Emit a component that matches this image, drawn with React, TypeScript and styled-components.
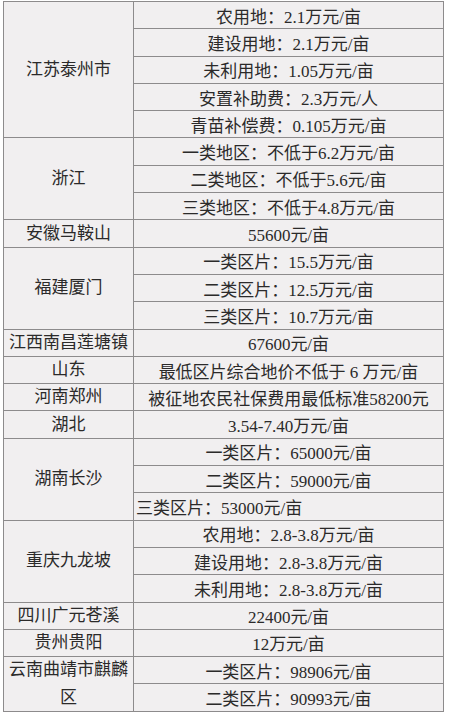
import styled, { createGlobalStyle } from 'styled-components';

// Land compensation standards by region. Left column spans its sub-rows.
type Entry = { text: string; left?: boolean };
type Region = { name: string; rows: Entry[] };

const REGIONS: Region[] = [
  {
    name: '江苏泰州市',
    rows: [
      { text: '农用地：2.1万元/亩' },
      { text: '建设用地：2.1万元/亩' },
      { text: '未利用地：1.05万元/亩' },
      { text: '安置补助费：2.3万元/人' },
      { text: '青苗补偿费：0.105万元/亩' },
    ],
  },
  {
    name: '浙江',
    rows: [
      { text: '一类地区：不低于6.2万元/亩' },
      { text: '二类地区：不低于5.6元/亩' },
      { text: '三类地区：不低于4.8万元/亩' },
    ],
  },
  { name: '安徽马鞍山', rows: [{ text: '55600元/亩' }] },
  {
    name: '福建厦门',
    rows: [
      { text: '一类区片：15.5万元/亩' },
      { text: '二类区片：12.5万元/亩' },
      { text: '三类区片：10.7万元/亩' },
    ],
  },
  { name: '江西南昌莲塘镇', rows: [{ text: '67600元/亩' }] },
  { name: '山东', rows: [{ text: '最低区片综合地价不低于 6 万元/亩' }] },
  { name: '河南郑州', rows: [{ text: '被征地农民社保费用最低标准58200元' }] },
  { name: '湖北', rows: [{ text: '3.54-7.40万元/亩' }] },
  {
    name: '湖南长沙',
    rows: [
      { text: '一类区片：65000元/亩' },
      { text: '二类区片：59000元/亩' },
      { text: '三类区片：53000元/亩', left: true },
    ],
  },
  {
    name: '重庆九龙坡',
    rows: [
      { text: '农用地：2.8-3.8万元/亩' },
      { text: '建设用地：2.8-3.8万元/亩' },
      { text: '未利用地：2.8-3.8万元/亩' },
    ],
  },
  { name: '四川广元苍溪', rows: [{ text: '22400元/亩' }] },
  { name: '贵州贵阳', rows: [{ text: '12万元/亩' }] },
  {
    name: '云南曲靖市麒麟区',
    rows: [{ text: '一类区片：98906元/亩' }, { text: '二类区片：90993元/亩' }],
  },
];

const TOTAL_ROWS = REGIONS.reduce((n, r) => n + r.rows.length, 0);

const Global = createGlobalStyle`
  html, body { margin: 0; padding: 0; background: #ffffff; }
`;

const Page = styled.div`
  padding: 1px 0 0 3px;
`;

const Grid = styled.div<{ $rows: number }>`
  display: grid;
  grid-template-columns: 129px 309px;
  grid-template-rows: repeat(${p => p.$rows}, 26.3px);
  gap: 1px;
  padding: 1px;
  width: max-content;
  background: #8d8b8c;
  font-family: 'Liberation Serif', 'Noto Sans CJK SC', serif;
  font-size: 17px;
  color: #2b2a2a;
`;

const RegionCell = styled.div<{ $span: number }>`
  grid-column: 1;
  grid-row: span ${p => p.$span};
  display: flex;
  align-items: center;
  justify-content: center;
  text-align: center;
  line-height: 28px;
  background: #f1eff0;
`;

const ValueCell = styled.div<{ $left?: boolean }>`
  grid-column: 2;
  display: flex;
  align-items: center;
  justify-content: ${p => (p.$left ? 'flex-start' : 'center')};
  padding-left: ${p => (p.$left ? '2px' : '0')};
  white-space: nowrap;
  background: #f1eff0;
`;

export default function App() {
  return (
    <Page>
      <Global />
      <Grid $rows={TOTAL_ROWS}>
        {REGIONS.map(r => [
          <RegionCell key={r.name} $span={r.rows.length}>
            {r.name}
          </RegionCell>,
          ...r.rows.map((e, i) => (
            <ValueCell key={`${r.name}-${i}`} $left={e.left}>
              {e.text}
            </ValueCell>
          )),
        ])}
      </Grid>
    </Page>
  );
}
